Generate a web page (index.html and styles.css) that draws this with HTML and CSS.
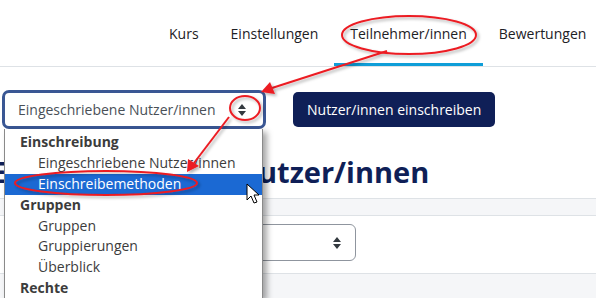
FILE: index.html
```html
<!DOCTYPE html>
<html lang="de">
<head>
    <meta charset="UTF-8">
    <title>Teilnehmer/innen</title>
    <link rel="stylesheet" href="styles.css">
</head>
<body>

    <header class="course-nav">
        <a class="nav-item">Kurs</a>
        <a class="nav-item">Einstellungen</a>
        <a class="nav-item active">Teilnehmer/innen</a>
        <a class="nav-item">Bewertungen</a>
    </header>

    <main class="page">
        <div class="toolbar">
            <div class="jump-select">
                <span>Eingeschriebene Nutzer/innen</span>
                <svg class="updown" width="10" height="14" viewBox="0 0 10 14"><path d="M5 1 L9 6 H1 Z M1 8 H9 L5 13 Z" fill="#343a40"/></svg>
            </div>
            <button class="btn-primary">Nutzer/innen einschreiben</button>
        </div>

        <h2 class="page-title">Eingeschriebene Nutzer/innen</h2>

        <div class="filter-bar"></div>
        <div class="filter-row">
            <div class="filter-select">
                <svg class="updown" width="10" height="14" viewBox="0 0 10 14"><path d="M5 1 L9 6 H1 Z M1 8 H9 L5 13 Z" fill="#343a40"/></svg>
            </div>
        </div>
        <div class="filter-bar bottom"></div>

        <ul class="dropdown">
            <li class="group">Einschreibung</li>
            <li class="option">Eingeschriebene Nutzer/innen</li>
            <li class="option selected">Einschreibemethoden</li>
            <li class="group">Gruppen</li>
            <li class="option">Gruppen</li>
            <li class="option">Gruppierungen</li>
            <li class="option">Überblick</li>
            <li class="group">Rechte</li>
        </ul>
    </main>

    <!-- annotations drawn over the screenshot -->
    <svg class="marks" width="596" height="298" viewBox="0 0 596 298">
        <defs>
            <filter id="shade" x="-20%" y="-20%" width="140%" height="140%">
                <feDropShadow dx="2" dy="2" stdDeviation="1.5" flood-color="#000" flood-opacity="0.3"/>
            </filter>
        </defs>
        <g filter="url(#shade)" stroke="#ec1c24" stroke-width="2" fill="none">
            <ellipse cx="409" cy="35" rx="67" ry="19"/>
            <ellipse cx="245" cy="108" rx="15" ry="12"/>
            <ellipse cx="106" cy="183" rx="91" ry="12"/>
            <line x1="387" y1="51" x2="272" y2="88"/>
            <line x1="229" y1="117" x2="194" y2="163"/>
        </g>
        <g filter="url(#shade)" fill="#ec1c24">
            <polygon points="261,92 270,82 275,94"/>
            <polygon points="187,172 188,159 199,166"/>
        </g>
        <path class="cursor" d="M247 184 V200 L251 196 L254 203 L257 202 L254 195 L259 195 Z" fill="#fff" stroke="#000" stroke-width="1"/>
    </svg>

</body>
</html>
```

FILE: styles.css
```css
* {
    margin: 0;
    padding: 0;
    box-sizing: border-box;
}

body {
    font-family: "Open Sans", "Noto Sans", sans-serif;
    background-color: #fff;
    color: #1d2125;
    width: 596px;
    height: 298px;
    overflow: hidden;
    position: relative;
}

.course-nav {
    display: flex;
    height: 67px;
    padding-left: 153px;
    border-bottom: 1px solid #dee2e6;
    white-space: nowrap;
    overflow: hidden;
}

.nav-item {
    display: flex;
    align-items: center;
    padding: 4px 16px 0;
    font-size: 14px;
    color: #1d2125;
    border-bottom: 3px solid transparent;
}

.nav-item.active {
    border-bottom-color: #0f9ed8;
}

.page {
    position: relative;
}

.toolbar {
    display: flex;
    align-items: center;
    gap: 27px;
    padding: 23px 0 0 2px;
}

.jump-select {
    display: flex;
    align-items: center;
    justify-content: space-between;
    width: 264px;
    height: 39px;
    padding: 0 16px 0 13px;
    border: 3px solid #3a5794;
    border-radius: 7px;
    font-size: 14px;
    color: #495057;
}

.btn-primary {
    height: 35px;
    padding: 0 14px;
    border: none;
    border-radius: 5px;
    background-color: #0f1f57;
    color: #fff;
    font-family: inherit;
    font-size: 14px;
}

.page-title {
    margin-left: -10px;
    padding-top: 23px;
    height: 69px;
    font-size: 29px;
    font-weight: 700;
    color: #0f1f57;
    white-space: nowrap;
}

.filter-bar {
    height: 18px;
    background-color: #f5f6f8;
    border-top: 1px solid #dee2e6;
    border-bottom: 1px solid #dee2e6;
}

.filter-bar.bottom {
    height: 25px;
    border-bottom: none;
}

.filter-row {
    height: 57px;
    padding: 8px 0 0 20px;
}

.filter-select {
    display: flex;
    align-items: center;
    justify-content: flex-end;
    width: 336px;
    height: 37px;
    padding-right: 13px;
    border: 1px solid #8f959e;
    border-radius: 6px;
}

.dropdown {
    position: absolute;
    top: 62px;
    left: 4px;
    width: 259px;
    height: 169px;
    padding-top: 3px;
    list-style: none;
    background-color: #fff;
    border: 1px solid #8a8a8a;
    border-top: none;
    border-bottom: none;
    box-shadow: 4px 3px 6px rgba(0, 0, 0, 0.35);
    font-size: 14px;
}

.dropdown li {
    height: 20.9px;
    line-height: 20.9px;
}

.dropdown .group {
    padding-left: 15px;
    font-weight: 700;
    color: #3c3c3c;
}

.dropdown .option {
    padding-left: 33px;
    color: #3c3c3c;
}

.dropdown .selected {
    background-color: #1b69d3;
    color: #fff;
}

.marks {
    position: absolute;
    top: 0;
    left: 0;
}
```
